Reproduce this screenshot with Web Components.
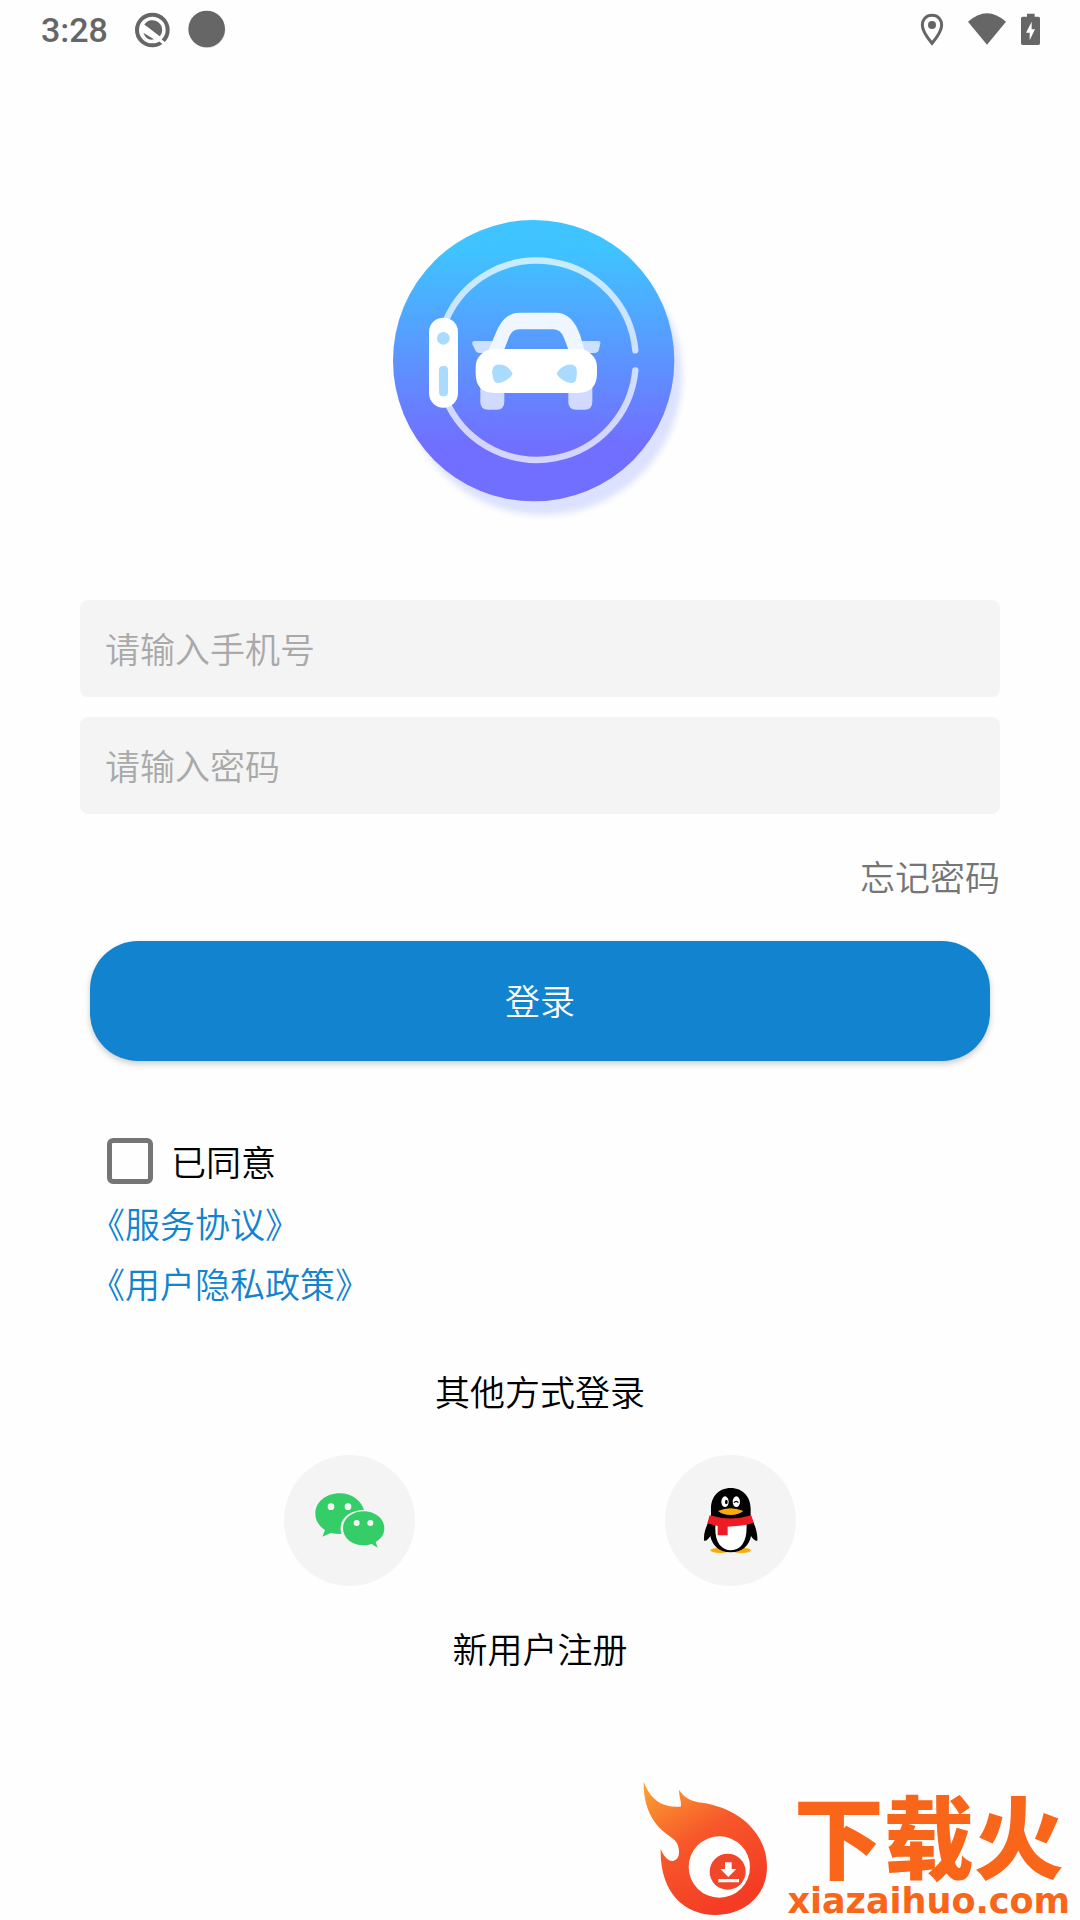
<!DOCTYPE html>
<html lang="zh-CN">
<head>
<meta charset="UTF-8">
<meta name="viewport" content="width=device-width, initial-scale=1">
<title>登录</title>
<style>
    body{
        margin:0;
        background:#fefefe;
        color:#000;
        font-family:"Noto Sans CJK SC", sans-serif;
        font-size:35px;
        font-weight:350;
        line-height:60px;
    }
</style>
</head>
<body>
<login-page></login-page>

<script>
class StatusBar extends HTMLElement{
    constructor(){
        super();
        this.attachShadow({mode: 'open'});
        this.shadowRoot.innerHTML = `
        <style>
        :host{
            display:flex;
            align-items:center;
            justify-content:space-between;
            height:60px;
            padding:0 38px 0 41px;
            color:#666;
            font-family:Roboto, sans-serif;
            font-size:34px;
            font-weight:500;
        }
        div{
            display:flex;
            align-items:center;
        }
        svg{
            display:block;
            height:60px;
        }
        </style>
        <div>
            <span><slot></slot></span>
            <svg width="132" viewBox="324 0 396 180" fill="#666">
                <circle cx="457" cy="90" r="46" fill="none" stroke="#666" stroke-width="12"/>
                <path d="M433 74A29 29 0 1 1 479 109L443 81Z"/>
                <path d="M430 98L462 118Q440 124 430 98Z"/>
                <path d="M470 112L502 138" fill="none" stroke="#fefefe" stroke-width="9"/>
                <circle cx="622" cy="90" r="54" fill="#ddd"/>
                <circle cx="620" cy="87" r="55"/>
            </svg>
        </div>
        <svg width="124" viewBox="114 0 372 180" fill="#666">
            <path d="M156 46C137 46 127 60 127 75C127 96 145 116 156 130C167 116 185 96 185 75C185 60 175 46 156 46Z" fill="none" stroke="#666" stroke-width="9"/>
            <circle cx="156" cy="75" r="12"/>
            <path d="M264 65Q321 14 378 65L321 134Z"/>
            <path d="M441 41H464V50H475Q480 50 480 55V130Q480 135 475 135H428Q423 135 423 130V55Q423 50 428 50H441Z"/>
            <path d="M455 65L438 98H449V121L465 88H455Z" fill="#fefefe"/>
        </svg>
        `
    }
}
customElements.define("status-bar", StatusBar)

class AppLogo extends HTMLElement{
    constructor(){
        super();
        this.attachShadow({mode: 'open'});
        this.shadowRoot.innerHTML = `
        <style>
        :host{
            display:flex;
            justify-content:center;
        }
        svg{
            display:block;
            width:320px;
            height:320px;
        }
        </style>
        <svg viewBox="0 0 960 960">
            <defs>
                <linearGradient id="sky" x1="0" y1="0" x2="0" y2="1">
                    <stop offset=".1" stop-color="#3fc4ff"/>
                    <stop offset=".8" stop-color="#716fff"/>
                </linearGradient>
                <filter id="soft" x="-10%" y="-10%" width="120%" height="120%">
                    <feGaussianBlur stdDeviation="9"/>
                </filter>
            </defs>
            <circle cx="488" cy="512" r="418" fill="#dbe1ff" filter="url(#soft)"/>
            <circle cx="461" cy="467" r="422" fill="url(#sky)"/>
            <g fill="none" stroke="#fff" stroke-opacity=".7" stroke-width="19" stroke-linecap="round">
                <path d="M198 345A297 297 0 0 1 766 436"/>
                <path d="M766 496A297 297 0 0 1 206 603"/>
            </g>
            <rect x="147" y="338" width="87" height="270" rx="43" fill="#fff"/>
            <circle cx="190" cy="400" r="19" fill="#a9dbff"/>
            <rect x="177" y="483" width="27" height="91" rx="12" fill="#a9dbff"/>
            <g fill="#fff" fill-opacity=".7">
                <path d="M284 408H344L326 444H296Q288 444 286 436L277 418Q275 408 284 408Z"/>
                <path d="M598 408H655Q662 408 661 416L656 436Q654 444 646 444H616Z"/>
                <path d="M301 545H373V590Q373 614 350 614H324Q301 614 301 590Z"/>
                <path d="M565 545H637V590Q637 614 614 614H588Q565 614 565 590Z"/>
            </g>
            <path fill="#f0f6ff" fill-rule="evenodd" d="M326 434Q335 414 344 392Q369 323 418 323H528Q577 323 601 392Q607 414 615 440H326ZM373 433H565L551 397Q542 373 519 373H418Q397 373 388 394Z"/>
            <path fill="#fff" d="M340 432H600Q617 432 632 446Q651 462 651 485V505Q651 564 592 564H344Q287 564 287 505V485Q287 462 305 446Q322 432 340 432Z"/>
            <path fill="#a9dbff" d="M344 482Q352 477 365 479Q383 482 397 503Q398 506 396 510Q381 530 356 534Q346 535 342 527Q332 503 340 487Z"/>
            <path fill="#a9dbff" d="M584 482Q576 477 563 479Q545 482 531 503Q529 506 532 510Q547 530 572 534Q582 535 587 527Q594 503 588 487Z"/>
        </svg>
        `
    }
}
customElements.define("app-logo", AppLogo)

class TextField extends HTMLElement{
    constructor(){
        super();
        this.attachShadow({mode: 'open'});
        this.shadowRoot.innerHTML = `
        <style>
        :host{
            display:block;
        }
        input{
            display:block;
            box-sizing:border-box;
            width:100%;
            height:97px;
            padding:0 25px 3px;
            border:none;
            outline:none;
            border-radius:8px;
            background:#f4f4f4;
            color:#000;
            font:inherit;
        }
        input::placeholder{
            color:#a9a9a9;
            opacity:1;
        }
        </style>
        <input>
        `
    }
    connectedCallback(){
        const input = this.shadowRoot.querySelector("input");
        input.type = this.getAttribute("type") || "text";
        input.placeholder = this.getAttribute("hint");
        input.setAttribute("aria-label", this.getAttribute("hint"));
    }
}
customElements.define("text-field", TextField)

class TextLink extends HTMLElement{
    constructor(){
        super();
        this.attachShadow({mode: 'open'});
        this.shadowRoot.innerHTML = `
        <style>
        :host{
            display:block;
        }
        a{
            color:inherit;
            text-decoration:none;
        }
        </style>
        <a href="#"><slot></slot></a>
        `
    }
}
customElements.define("text-link", TextLink)

class SubmitButton extends HTMLElement{
    constructor(){
        super();
        this.attachShadow({mode: 'open'});
        this.shadowRoot.innerHTML = `
        <style>
        :host{
            display:block;
        }
        button{
            display:block;
            width:100%;
            height:120px;
            padding:0 0 3px;
            border:none;
            border-radius:48px;
            background:#1283ce;
            box-shadow:0 3px 6px rgba(0,0,0,.2);
            color:#fff;
            font:inherit;
            cursor:pointer;
        }
        </style>
        <button type="button"><slot></slot></button>
        `
    }
}
customElements.define("submit-button", SubmitButton)

class AgreeCheck extends HTMLElement{
    constructor(){
        super();
        this.attachShadow({mode: 'open'});
        this.shadowRoot.innerHTML = `
        <style>
        :host{
            display:flex;
        }
        label{
            display:flex;
            align-items:center;
            gap:18px;
        }
        input{
            appearance:none;
            box-sizing:border-box;
            width:46px;
            height:46px;
            margin:0;
            border:5px solid #757575;
            border-radius:6px;
        }
        input:checked{
            background:#1283ce;
        }
        </style>
        <label><input type="checkbox"><span><slot></slot></span></label>
        `
    }
}
customElements.define("agree-check", AgreeCheck)

class SocialButton extends HTMLElement{
    constructor(){
        super();
        this.attachShadow({mode: 'open'});
        this.shadowRoot.innerHTML = `
        <style>
        :host{
            display:block;
        }
        button{
            display:block;
            width:131px;
            height:131px;
            padding:0;
            border:none;
            border-radius:50%;
            background:#f4f4f4;
            cursor:pointer;
        }
        svg{
            display:block;
            width:100%;
            height:100%;
        }
        </style>
        <button type="button"></button>
        `
    }
    connectedCallback(){
        const button = this.shadowRoot.querySelector("button");
        if(this.getAttribute("kind") === "wechat"){
            button.setAttribute("aria-label", "微信");
            button.innerHTML = `
            <svg viewBox="43 44 393 393">
                <path fill="#35cd68" d="M210 159C168 159 137 186 137 220C137 240 148 257 166 269L158 289L183 278Q198 281 215 281C204 240 235 209 283 209C274 180 247 159 210 159Z"/>
                <path fill="#35cd68" d="M282 213C247 213 220 235 220 264C220 293 247 315 282 315Q295 315 306 311L324 322L318 305C335 296 344 281 344 264C344 235 317 213 282 213Z"/>
                <g fill="#f4f4f4">
                    <circle cx="184" cy="199" r="10"/>
                    <circle cx="235" cy="199" r="10"/>
                    <circle cx="261" cy="248" r="9"/>
                    <circle cx="302" cy="248" r="9"/>
                </g>
            </svg>`
        }
        else{
            button.setAttribute("aria-label", "QQ");
            button.innerHTML = `
            <svg viewBox="43 44 393 393">
                <ellipse cx="208" cy="330" rx="29" ry="8" fill="#faab07"/>
                <ellipse cx="272" cy="330" rx="29" ry="8" fill="#faab07"/>
                <path d="M240 143C203 143 181 170 181 205V228C174 246 158 268 160 301C166 304 174 295 179 287C184 313 204 336 240 336C277 336 296 313 301 287C306 295 315 304 320 301C322 270 307 244 300 228V205C300 170 277 143 240 143Z"/>
                <path fill="#fff" d="M195 248H287C292 300 272 330 241 330C208 330 189 300 195 248Z"/>
                <ellipse cx="223" cy="184" rx="11" ry="16" fill="#fff"/>
                <ellipse cx="257" cy="184" rx="11" ry="16" fill="#fff"/>
                <ellipse cx="227" cy="185" rx="4" ry="7"/>
                <path d="M250 187Q257 179 263 187" fill="none" stroke="#000" stroke-width="4"/>
                <path fill="#faab07" d="M202 212Q239 196 278 212Q263 224 240 224Q216 224 202 212Z"/>
                <path fill="#ed1c24" d="M177 225Q239 244 302 225L309 248Q275 258 231 259V285H201V257Q184 254 170 249Z"/>
            </svg>`
        }
    }
}
customElements.define("social-button", SocialButton)

class SiteMark extends HTMLElement{
    constructor(){
        super();
        this.attachShadow({mode: 'open'});
        this.shadowRoot.innerHTML = `
        <style>
        :host{
            display:flex;
            justify-content:flex-end;
            gap:18px;
            padding:0 10px 3px 0;
            color:#f96519;
        }
        svg{
            display:block;
            width:132px;
            height:140px;
        }
        .name{
            font-family:"Liberation Sans", "Noto Sans CJK SC", sans-serif;
            font-size:90px;
            font-weight:900;
            line-height:88px;
            padding-top:20px;
            text-align:center;
        }
        .site{
            font-family:"DejaVu Sans", sans-serif;
            font-size:35px;
            font-weight:700;
            line-height:32px;
        }
        </style>
        <svg viewBox="20 20 396 420">
            <defs>
                <linearGradient id="fire" x1="0" y1="0" x2=".55" y2="1">
                    <stop offset="0" stop-color="#fba530"/>
                    <stop offset=".5" stop-color="#f7572a"/>
                    <stop offset="1" stop-color="#f43c24"/>
                </linearGradient>
            </defs>
            <path fill="url(#fire)" d="M40 34C61 88 93 111 151 109C155 93 144 77 147 59C160 82 182 94 215 97C315 111 410 180 410 290C410 375 343 434 255 434C160 434 88 365 91 236C101 260 115 275 130 271C149 266 149 240 141 221C133 201 101 194 73 155C48 120 39 75 40 34Z"/>
            <circle cx="267" cy="290" r="92" fill="#fff"/>
            <circle cx="292" cy="304" r="54" fill="#f2462a"/>
            <path fill="#fff" d="M284 276H304V296H318L294 320L270 296H284ZM264 326H326V336H264Z"/>
        </svg>
        <div>
            <div class="name"><slot name="name"></slot></div>
            <div class="site"><slot></slot></div>
        </div>
        `
    }
}
customElements.define("site-mark", SiteMark)

class LoginPage extends HTMLElement{
    constructor(){
        super();
        this.attachShadow({mode: 'open'});
        this.shadowRoot.innerHTML = `
        <style>
        :host{
            display:flex;
            flex-direction:column;
            min-height:100vh;
        }
        app-logo{
            margin-top:145px;
        }
        main{
            padding:0 80px;
        }
        .fields{
            display:grid;
            gap:20px;
            margin-top:75px;
        }
        .forgot{
            display:flex;
            justify-content:flex-end;
            margin-top:32px;
            color:#757575;
        }
        submit-button{
            margin:35px 10px 0;
        }
        .agree{
            margin-top:70px;
            padding-left:10px;
            color:#1283ce;
        }
        agree-check{
            margin-bottom:2px;
            padding-left:17px;
            color:#000;
        }
        .other{
            margin-top:48px;
            text-align:center;
        }
        .social{
            display:flex;
            justify-content:center;
            gap:250px;
            margin-top:34px;
        }
        .register{
            margin-top:32px;
            text-align:center;
        }
        site-mark{
            margin-top:auto;
        }
        </style>
        <status-bar>3:28</status-bar>
        <app-logo></app-logo>
        <main>
            <div class="fields">
                <text-field type="tel" hint="请输入手机号"></text-field>
                <text-field type="password" hint="请输入密码"></text-field>
            </div>
            <div class="forgot"><text-link>忘记密码</text-link></div>
            <submit-button>登录</submit-button>
            <div class="agree">
                <agree-check>已同意</agree-check>
                <text-link>《服务协议》</text-link>
                <text-link>《用户隐私政策》</text-link>
            </div>
            <div class="other">其他方式登录</div>
            <div class="social">
                <social-button kind="wechat"></social-button>
                <social-button kind="qq"></social-button>
            </div>
            <div class="register"><text-link>新用户注册</text-link></div>
        </main>
        <site-mark><span slot="name">下载火</span>xiazaihuo.com</site-mark>
        `
    }
}
customElements.define("login-page", LoginPage)
</script>
</body>
</html>
